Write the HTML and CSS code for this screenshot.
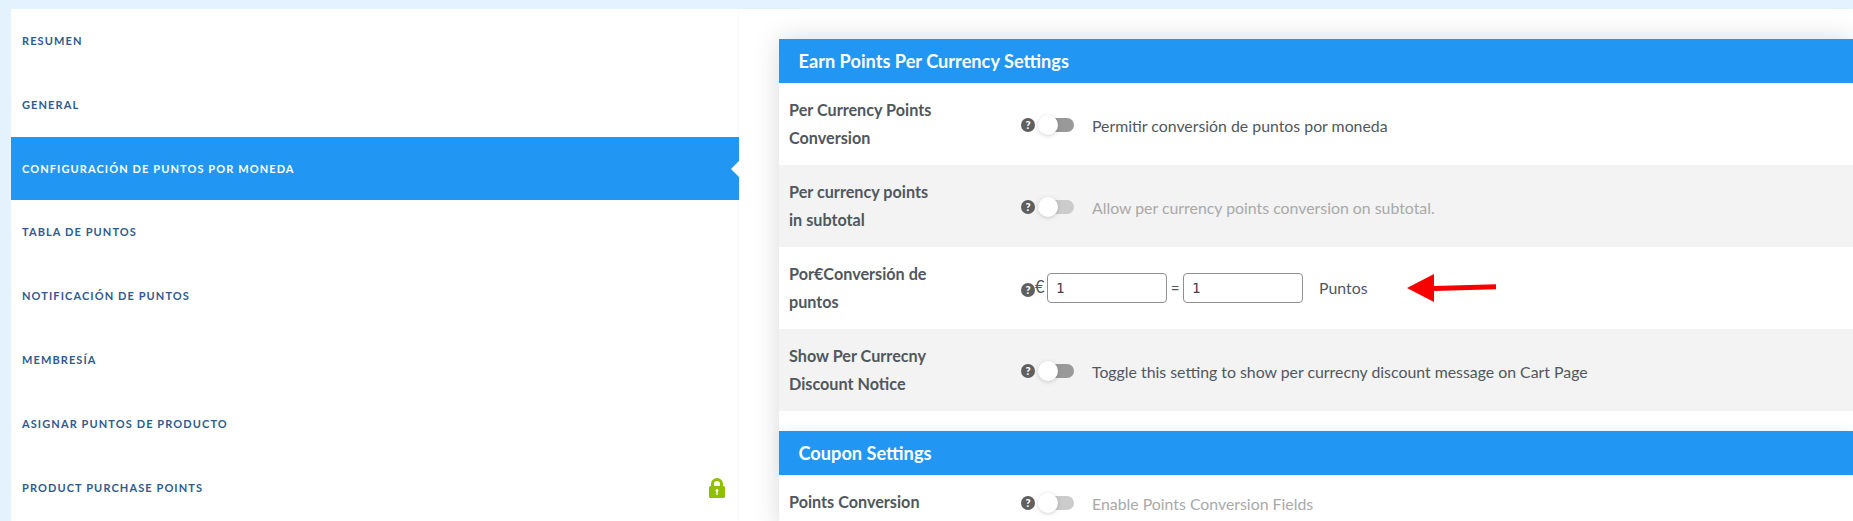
FILE: index.html
```html
<!DOCTYPE html>
<html lang="es">
<head>
<meta charset="utf-8">
<title>Configuración de puntos por moneda</title>
<link rel="stylesheet" href="styles.css">
</head>
<body>
<div class="page">
  <nav class="side">
    <a class="item">Resumen</a>
    <a class="item">General</a>
    <a class="item active">Configuración de puntos por moneda</a>
    <a class="item">Tabla de puntos</a>
    <a class="item">Notificación de puntos</a>
    <a class="item">Membresía</a>
    <a class="item">Asignar puntos de producto</a>
    <a class="item">Product Purchase Points
      <svg class="lock" viewBox="0 0 16 20"><path fill="#8fc000" fill-rule="evenodd" d="M2 8V6a6 6 0 0 1 12 0v2h.5A1.500 1.500 0 0 1 16 9.500v9a1.500 1.500 0 0 1-1.500 1.500h-13A1.500 1.500 0 0 1 0 18.500v-9A1.500 1.500 0 0 1 1.500 8zM5 8h6V6a3 3 0 0 0-6 0zM8 11a1.500 1.500 0 0 0-.7 2.800V17h1.400v-3.200A1.500 1.500 0 0 0 8 11z"/></svg>
    </a>
  </nav>
  <main class="main">
    <div class="cards">
    <section class="card">
      <h2 class="head">Earn Points Per Currency Settings</h2>
      <div class="row">
        <div class="label">Per Currency Points Conversion</div>
        <div class="field sw"><span class="help">?</span><span class="toggle"></span><span class="desc">Permitir conversión de puntos por moneda</span></div>
      </div>
      <div class="row alt">
        <div class="label">Per currency points in subtotal</div>
        <div class="field sw"><span class="help">?</span><span class="toggle off"></span><span class="desc off">Allow per currency points conversion on subtotal.</span></div>
      </div>
      <div class="row">
        <div class="label">Por€Conversión de puntos</div>
        <div class="field"><span class="help low">?</span><span class="cur">€</span><input class="num" value="1"><span class="eq">=</span><input class="num" value="1"><span class="pts">Puntos</span>
          <svg class="arrow" viewBox="0 0 90 30"><path fill="#f60000" d="M0 15 27 1v12l62-1.700v5L27 18v11z"/></svg>
        </div>
      </div>
      <div class="row alt">
        <div class="label">Show Per Currecny Discount Notice</div>
        <div class="field sw"><span class="help">?</span><span class="toggle"></span><span class="desc">Toggle this setting to show per currecny discount message on Cart Page</span></div>
      </div>
    </section>
    <section class="card">
      <h2 class="head second">Coupon Settings</h2>
      <div class="row">
        <div class="label">Points Conversion</div>
        <div class="field sw"><span class="help">?</span><span class="toggle off"></span><span class="desc off">Enable Points Conversion Fields</span></div>
      </div>
    </section>
    </div>
  </main>
</div>
</body>
</html>
```
FILE: styles.css
```css
* { box-sizing: border-box; }
html, body { margin: 0; height: 100%; overflow: hidden; }
body { background: #e3f2fd; font-family: Lato, "Open Sans", sans-serif; color: #50575e; }
.page { display: flex; height: 521px; padding: 9px 0 0 11px; overflow: hidden; }
.side { width: 728px; flex: none; background: #fff; }
.item { position: relative; display: flex; align-items: center; justify-content: space-between; height: 64px; padding: 0 14px 1px 11px; font-size: 11px; font-weight: 700; letter-spacing: 1.1px; text-transform: uppercase; color: #2e5b8c; }
.active { background: #2196f3; color: #fff; height: 63px; padding-bottom: 0; }
.active::after { content: ""; position: absolute; right: 0; top: 24px; width: 8px; height: 16px; background: #fff; clip-path: polygon(100% 0, 0 50%, 100% 100%); }
.lock { width: 16px; height: 20px; }
.main { flex: 1; min-width: 0; background: #fff; padding: 30px 0 0 40px; box-shadow: -1px 0 2px rgba(0,0,0,.03); overflow: hidden; }
.cards { background: #fff; box-shadow: 0 0 25px rgba(0,0,0,.15); }
.card { margin-bottom: 20px; }
.head { margin: 0; height: 44px; padding: 0 20px 0 19.500px; display: flex; align-items: center; background: #2196f3; color: #fff; font-size: 18.200px; font-weight: 700; }
.second { box-shadow: 0 -2px 10px rgba(0,0,0,.05); }
.row { display: flex; align-items: center; padding: 13px 0 13px 10px; }
.alt { background: #f3f3f3; }
.label { width: 232px; flex: none; padding-right: 84px; font-size: 16.200px; font-weight: 700; line-height: 28px; }
.field { position: relative; display: flex; align-items: center; flex: 1; font-size: 15.850px; }
.sw { padding-top: 2px; }
.help { width: 14px; height: 14px; flex: none; border-radius: 50%; background: #5f5f5f; color: #fff; font-size: 11px; font-weight: 900; line-height: 14px; text-align: center; }
.low { margin-top: 3px; }
.toggle { position: relative; width: 32px; height: 14px; flex: none; margin-left: 7px; border-radius: 7px; background: #999; }
.toggle::before { content: ""; position: absolute; left: -4px; top: -3px; width: 20px; height: 20px; border-radius: 50%; background: #fff; box-shadow: 0 1px 4px rgba(0,0,0,.18); }
.toggle.off { background: #ccc; }
.desc { margin-left: 18px; white-space: nowrap; }
.desc.off { color: #a9a9a9; }
.cur { width: 12px; margin: -3px 0 0 0; font-size: 16.500px; }
.num { width: 120px; height: 30px; padding: 0 8px; border: 1px solid #8f8f8f; border-radius: 4px; background: #fff; color: #3c434a; font: 14px "DejaVu Sans Mono", monospace; }
.eq { width: 16px; text-align: center; font-size: 15px; }
.pts { margin: -2px 0 0 16px; }
.arrow { position: absolute; left: 386px; top: 0; width: 90px; height: 30px; }
```
